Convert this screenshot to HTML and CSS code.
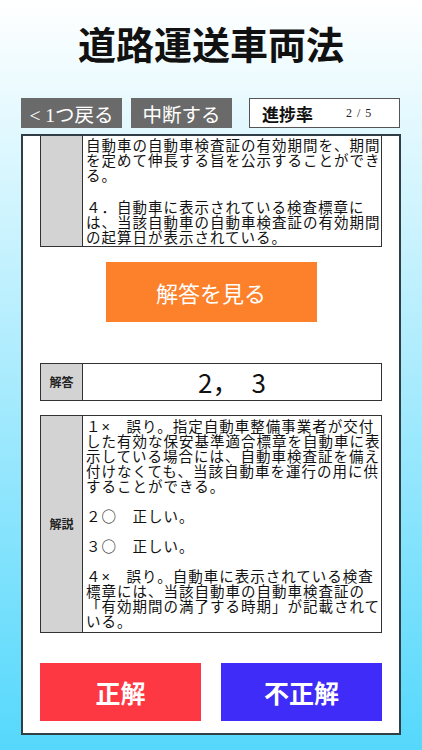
FILE: index.html
```html
<!DOCTYPE html>
<html lang="ja">
<head>
<meta charset="utf-8">
<title>道路運送車両法</title>
<link rel="stylesheet" href="styles.css">
</head>
<body>
<h1 class="title">道路運送車両法</h1>
<div class="controls">
  <div class="btn-gray btn-back">&lt; 1つ戻る</div>
  <div class="btn-gray">中断する</div>
  <div class="progress">
    <span class="progress-label">進捗率</span>
    <span class="progress-count">2 / 5</span>
  </div>
</div>
<div class="panel">
  <div class="qtable">
    <div class="label-col"></div>
    <div class="cell-text qtext">
      <p>自動車の自動車検査証の有効期間を、期間<br>を定めて伸長する旨を公示することができ<br>る。</p>
      <p>４．自動車に表示されている検査標章に<br>は、当該自動車の自動車検査証の有効期間<br>の起算日が表示されている。</p>
    </div>
  </div>
  <div class="show-answer">解答を見る</div>
  <div class="arow">
    <div class="label-col">解答</div>
    <div class="answer-text">2，　3</div>
  </div>
  <div class="etable">
    <div class="label-col">解説</div>
    <div class="cell-text etext">
      <p>１×　誤り。指定自動車整備事業者が交付<br>した有効な保安基準適合標章を自動車に表<br>示している場合には、自動車検査証を備え<br>付けなくても、当該自動車を運行の用に供<br>することができる。</p>
      <p>２<span class="mark">○</span>　正しい。</p>
      <p>３<span class="mark">○</span>　正しい。</p>
      <p>４×　誤り。自動車に表示されている検査<br>標章には、当該自動車の自動車検査証の<br>「有効期間の満了する時期」が記載されて<br>いる。</p>
    </div>
  </div>
  <div class="judge">
    <div class="judge-btn correct">正解</div>
    <div class="judge-btn wrong">不正解</div>
  </div>
</div>
</body>
</html>
```
FILE: styles.css
```css
html {
  height: 100%;
}
body {
  margin: 0;
  height: 100%;
  overflow: hidden;
  background: linear-gradient(180deg, #ffffff 0%, #55d8fc 100%);
  font-family: "Noto Sans CJK JP", sans-serif;
  color: #111;
}
.title {
  margin: 0;
  height: 85px;
  line-height: 85px;
  text-align: center;
  font-size: 38px;
  font-weight: 700;
  color: #111;
}
.controls {
  display: flex;
  margin: 13px 0 0 21px;
  height: 30px;
}
.btn-gray {
  width: 101px;
  background: #6a6a6a;
  color: #fff;
  font-family: "Liberation Serif", "Noto Sans CJK JP", serif;
  font-size: 19.5px;
  display: flex;
  align-items: center;
  justify-content: center;
  white-space: nowrap;
}
.btn-back {
  margin-right: 9px;
}
.progress {
  margin-left: 17px;
  width: 151px;
  box-sizing: border-box;
  border: 1px solid #555;
  background: #fff;
  display: flex;
  align-items: center;
  padding-left: 12px;
}
.progress-label {
  font-weight: 700;
  font-size: 17px;
  color: #111;
}
.progress-count {
  margin-left: 33px;
  font-family: "Liberation Serif", serif;
  font-size: 12px;
  letter-spacing: 1px;
  color: #222;
}
.panel {
  margin: 6px 0 0 21px;
  width: 380px;
  height: 601px;
  box-sizing: border-box;
  border: 2px solid #2f3f45;
  background: #fff;
  padding: 0 17px;
  overflow: hidden;
}
.qtable,
.arow,
.etable {
  display: flex;
  border: 1px solid #333;
}
.qtable {
  border-top: none;
}
.label-col {
  width: 41px;
  flex: none;
  background: #d3d3d3;
  border-right: 1px solid #333;
  display: flex;
  align-items: center;
  justify-content: center;
  font-weight: 700;
  font-size: 12px;
  color: #222;
}
.cell-text {
  flex: 1;
  font-family: "Liberation Sans", "Noto Sans CJK JP", sans-serif;
  font-size: 14.5px;
  letter-spacing: 1px;
  line-height: 15px;
  white-space: nowrap;
  color: #111;
}
.cell-text p {
  margin: 0;
}
.mark {
  font-family: "Noto Sans CJK JP", sans-serif;
  line-height: 0;
}
.qtext {
  padding: 2.5px 0 0 3px;
}
.qtext p + p {
  margin-top: 17px;
}
.etext {
  padding: 4px 0 2px 3px;
}
.etext p + p {
  margin-top: 15px;
}
.show-answer {
  margin: 15px auto 0;
  width: 211px;
  height: 60px;
  background: #fd802a;
  color: #fff;
  font-size: 22px;
  display: flex;
  align-items: center;
  justify-content: center;
}
.arow {
  margin-top: 41px;
  height: 38px;
  box-sizing: border-box;
}
.answer-text {
  flex: 1;
  display: flex;
  align-items: center;
  justify-content: center;
  font-size: 26px;
  color: #111;
}
.etable {
  margin-top: 14px;
}
.judge {
  margin-top: 30px;
  display: flex;
  justify-content: space-between;
}
.judge-btn {
  width: 161px;
  height: 58px;
  display: flex;
  align-items: center;
  justify-content: center;
  color: #fff;
  font-size: 25px;
  font-weight: 700;
}
.correct {
  background: #fd3843;
}
.wrong {
  background: #3f2cf8;
}
```
